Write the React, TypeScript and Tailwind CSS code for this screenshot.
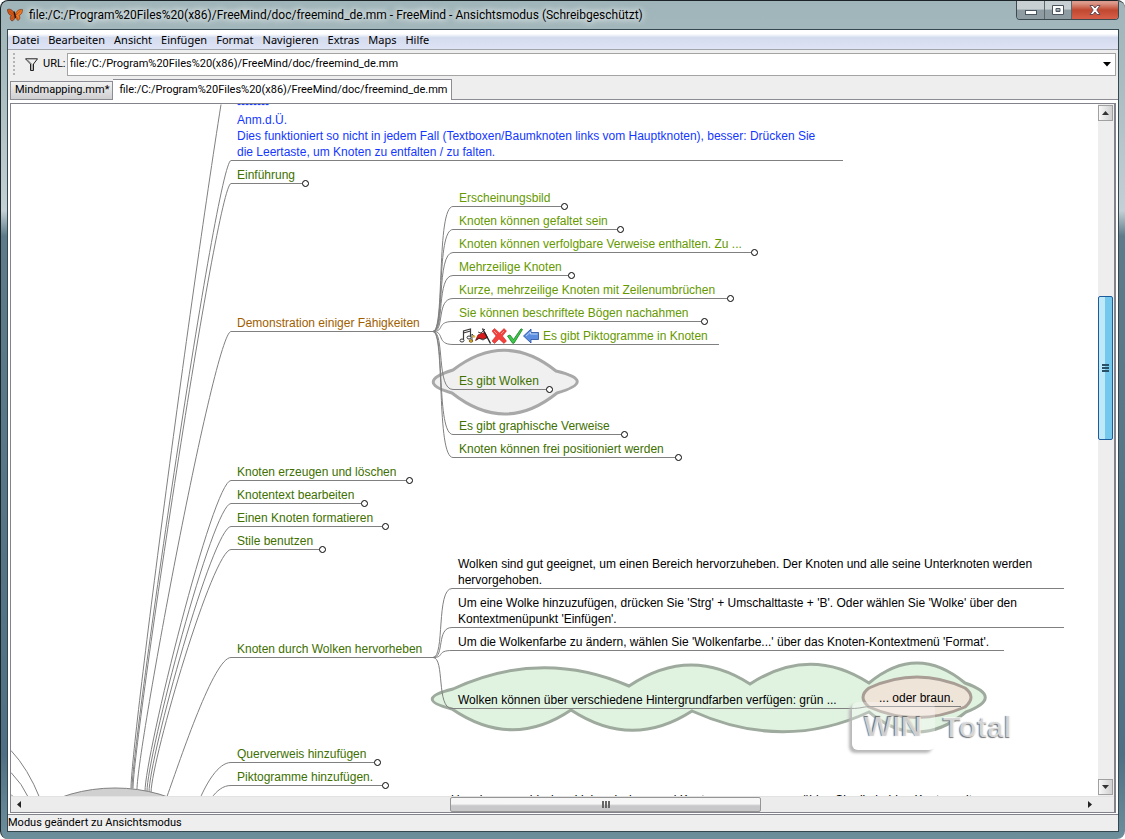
import React from 'react'
import clsx from 'clsx'

interface MapNode {
  x: number
  line: number
  end: number
  lines: string[]
  color: string
  folded?: boolean
  icons?: boolean
}

const BLUE = 'text-[#1437ff]'
const GREEN = 'text-[#407000]'
const LIME = 'text-[#669900]'
const BROWN = 'text-[#a06000]'
const BLACK = 'text-black'

const menus = [
  'Datei',
  'Bearbeiten',
  'Ansicht',
  'Einfügen',
  'Format',
  'Navigieren',
  'Extras',
  'Maps',
  'Hilfe',
]

const fileName = 'file:/C:/Program%20Files%20(x86)/FreeMind/doc/freemind_de.mm'

const nodes: MapNode[] = [
  {
    x: 231,
    line: 160,
    end: 843,
    color: BLUE,
    lines: [
      '--------',
      'Anm.d.Ü.',
      'Dies funktioniert so nicht in jedem Fall (Textboxen/Baumknoten links vom Hauptknoten), besser: Drücken Sie',
      'die Leertaste, um Knoten zu entfalten / zu falten.',
    ],
  },
  { x: 231, line: 183, end: 302, color: GREEN, folded: true, lines: ['Einführung'] },
  { x: 231, line: 331, end: 433, color: BROWN, lines: ['Demonstration einiger Fähigkeiten'] },
  { x: 231, line: 480, end: 406, color: GREEN, folded: true, lines: ['Knoten erzeugen und löschen'] },
  { x: 231, line: 503, end: 361, color: GREEN, folded: true, lines: ['Knotentext bearbeiten'] },
  { x: 231, line: 526, end: 382, color: GREEN, folded: true, lines: ['Einen Knoten formatieren'] },
  { x: 231, line: 549, end: 319, color: GREEN, folded: true, lines: ['Stile benutzen'] },
  { x: 231, line: 657, end: 433, color: GREEN, lines: ['Knoten durch Wolken hervorheben'] },
  { x: 231, line: 762, end: 374, color: GREEN, folded: true, lines: ['Querverweis hinzufügen'] },
  { x: 231, line: 785, end: 382, color: GREEN, folded: true, lines: ['Piktogramme hinzufügen.'] },

  { x: 453, line: 206, end: 561, color: LIME, folded: true, lines: ['Erscheinungsbild'] },
  { x: 453, line: 229, end: 617, color: LIME, folded: true, lines: ['Knoten können gefaltet sein'] },
  { x: 453, line: 252, end: 751, color: LIME, folded: true, lines: ['Knoten können verfolgbare Verweise enthalten. Zu ...'] },
  { x: 453, line: 275, end: 568, color: LIME, folded: true, lines: ['Mehrzeilige Knoten'] },
  { x: 453, line: 298, end: 727, color: LIME, folded: true, lines: ['Kurze, mehrzeilige Knoten mit Zeilenumbrüchen'] },
  { x: 453, line: 321, end: 701, color: LIME, folded: true, lines: ['Sie können beschriftete Bögen nachahmen'] },
  { x: 453, line: 344, end: 719, color: LIME, icons: true, lines: ['Es gibt Piktogramme in Knoten'] },
  { x: 453, line: 389, end: 546, color: GREEN, folded: true, lines: ['Es gibt Wolken'] },
  { x: 453, line: 434, end: 621, color: GREEN, folded: true, lines: ['Es gibt graphische Verweise'] },
  { x: 453, line: 457, end: 675, color: GREEN, folded: true, lines: ['Knoten können frei positioniert werden'] },

  {
    x: 452,
    line: 588,
    end: 1064,
    color: BLACK,
    lines: [
      'Wolken sind gut geeignet, um einen Bereich hervorzuheben. Der Knoten und alle seine Unterknoten werden',
      'hervorgehoben.',
    ],
  },
  {
    x: 452,
    line: 627,
    end: 1064,
    color: BLACK,
    lines: [
      "Um eine Wolke hinzuzufügen, drücken Sie 'Strg' + Umschalttaste + 'B'. Oder wählen Sie 'Wolke' über den",
      "Kontextmenüpunkt 'Einfügen'.",
    ],
  },
  {
    x: 452,
    line: 650,
    end: 1004,
    color: BLACK,
    lines: ["Um die Wolkenfarbe zu ändern, wählen Sie 'Wolkenfarbe...' über das Knoten-Kontextmenü 'Format'."],
  },
  {
    x: 452,
    line: 708,
    end: 851,
    color: BLACK,
    lines: ['Wolken können über verschiedene Hintergrundfarben verfügen: grün ...'],
  },
  { x: 873, line: 706, end: 961, color: BLACK, lines: ['... oder braun.'] },
  {
    x: 445,
    line: 808,
    end: 1064,
    color: BLACK,
    lines: ['Um einen graphischen Link zwischen zwei Knoten zu erzeugen, wählen Sie die beiden Knoten mit'],
  },
]

const rootEdges = [
  'M131 788C131 745 190 300 221 104',
  'M132 788C132 745 217 160 231 160',
  'M133 788C133 745 217 183 231 183',
  'M137 789C137 750 215 331 231 331',
  'M145 791C145 755 213 480 231 480',
  'M147 791C147 756 213 503 231 503',
  'M149 792C149 757 213 526 231 526',
  'M151 792C152 757 213 549 231 549',
  'M167 796C181 757 214 657 231 657',
  'M200 798C206 784 218 762 231 762',
  'M211 798C217 790 223 785 231 785',
  'M11 750Q28 768 40 798',
  'M11 772Q22 783 29 798',
  'M11 794L15 798',
]

const demoTargets = [206, 229, 252, 275, 298, 321, 344, 389, 434, 457]
const cloudTargets = [588, 627, 650, 708]

function Butterfly() {
  return (
    <svg className="h-4 w-4 shrink-0" viewBox="0 0 16 16" aria-hidden="true">
      <path d="M8 7C6 3 3 1.500 .5 2.500C.5 5 1.500 8 4.500 8.500C2.500 10 3 13 5 14C7 13.500 8 11 8.500 9Z" fill="#d4591a" stroke="#5e2508" strokeWidth=".6" />
      <path d="M8.500 7.500C9 4 12 2 15.500 2.500C15.500 5.500 14.500 7.500 12 8.500C13.500 10 13 12.500 11 13.500C9.500 12.500 8.500 11 8.500 9Z" fill="#f07a24" stroke="#6b2a08" strokeWidth=".6" />
      <path d="M2 4L7 8M4.500 12L7.500 9M13.500 4L9 8M11 12L9 9" stroke="#b9430e" strokeWidth=".8" />
      <path d="M7 4.500L8.500 11" stroke="#2a1408" strokeWidth="1.300" />
    </svg>
  )
}

function NodeIcons() {
  return (
    <svg className="mr-1 h-4 w-20 shrink-0" viewBox="0 0 80 16" aria-hidden="true">
      {/* music notes */}
      <path d="M4.500 12V3L11.500 1V9M4.500 5L11.500 3" fill="none" stroke="#3a3a3a" strokeWidth="1.200" />
      <ellipse cx="3" cy="12.500" rx="2" ry="1.500" fill="#fff" stroke="#333" />
      <ellipse cx="10" cy="9.500" rx="2" ry="1.500" fill="#fff" stroke="#333" />
      <path d="M13 6V13M13 6L15 8" stroke="#444" />
      <ellipse cx="12" cy="13" rx="1.800" ry="1.300" fill="#e9b42c" stroke="#57430a" strokeWidth=".7" />
      <circle cx="15" cy="8.500" r="1.300" fill="#e9b42c" />
      {/* flag */}
      <path d="M16.500 12.500L19 7L22 5.500L26 4.500L28.500 9.500L24 11L20 10.500Z" fill="#d81c1c" stroke="#6e0c0c" strokeWidth=".7" />
      <path d="M19 4L22 5L26 1M17 12L20 10L24 12L28 9.500" fill="none" stroke="#222" strokeWidth=".8" />
      <path d="M23.500 .5L31.500 15.500" stroke="#222" strokeWidth="1.400" />
      {/* cross */}
      <path d="M33 3L35.500 .5L40.500 5L45 .5L47.500 3L43.500 8L47.500 13L45 15.500L40 11L35.500 15.500L33 13L37 8Z" fill="#f2403c" stroke="#c51f1f" strokeWidth=".5" />
      <path d="M35 3L38 6M42 6L45 3" stroke="#ff9b94" />
      {/* check mark */}
      <path d="M48.500 8L51 7L54.500 11.500L62 .8L63.500 1.500L55 15.200H53.500Z" fill="#3fc94b" stroke="#147d20" strokeWidth=".8" />
      {/* arrow */}
      <path d="M64.500 8L72 1V4.500H79.500V11.500H72V15Z" fill="#5d8fe0" stroke="#244f9e" strokeWidth=".8" />
      <path d="M67 8L71.500 4V6H78.500" fill="none" stroke="#b9d1f6" />
    </svg>
  )
}

function Node({ node }: { node: MapNode }) {
  return (
    <div
      className={clsx('absolute whitespace-nowrap border-b border-[#808080] pl-[6px]', node.color)}
      style={{
        left: node.x,
        top: node.line - node.lines.length * 16,
        width: node.end - node.x,
      }}
    >
      {node.lines.map((text) => (
        <div key={text} className="flex h-4 items-center leading-4">
          {node.icons && <NodeIcons />}
          <span>{text}</span>
        </div>
      ))}
      {node.folded && (
        <span className="absolute -right-[7px] -bottom-1 h-[7px] w-[7px] rounded-full border border-black bg-white" />
      )}
    </div>
  )
}

function MindMap() {
  return (
    <div className="relative min-w-0 flex-1 overflow-hidden bg-white">
      <div className="absolute -left-[11px] -top-[104px] h-[900px] w-[1200px] font-['Liberation_Sans',Arial,sans-serif] text-[12px]">
        <svg className="absolute inset-0" width="1200" height="900" fill="none" aria-hidden="true">
          <path
            d="M453 370Q505 330 556 371Q598 381 557 393Q505 435 452 393Q414 382 453 370Z"
            fill="#f0f0f0"
            stroke="#a8a8a8"
            strokeWidth="3"
          />
          <path
            d="M453 689Q541 648 629 686Q690 645 750 684Q810 645 869 683Q917 643 965 683Q1005 697 966 712Q917 752 869 712Q783 752 692 711Q632 750 571 710Q512 750 452 709Q412 699 453 689Z"
            fill="#e0f2e0"
            stroke="#9daa9d"
            strokeWidth="3"
          />
          <path
            d="M869 688Q917 666 965 688Q977 697 965 707Q917 728 869 707Q857 697 869 688Z"
            fill="#efe4d8"
            stroke="#a99e95"
            strokeWidth="3"
          />
          <g stroke="#808080">
            {rootEdges.map((d) => (
              <path key={d} d={d} transform="translate(0 .5)" />
            ))}
            {demoTargets.map((y) => (
              <path key={y} d={`M433 331.500C445 331.500 436 ${y + 0.5} 453 ${y + 0.5}`} />
            ))}
            {cloudTargets.map((y) => (
              <path key={y} d={`M433 657.500C445 657.500 436 ${y + 0.5} 452 ${y + 0.5}`} />
            ))}
            <path d="M851 708.500C862 708.500 862 706.500 873 706.500" />
            <ellipse cx="115" cy="868" rx="115" ry="80" fill="#d0d0d0" />
          </g>
        </svg>
        {nodes.map((node) => (
          <Node key={node.line} node={node} />
        ))}
        <div className="absolute left-[852px] top-[702px] flex h-12 items-center text-[30px] text-white/70">
          <span className="flex h-12 w-[83px] items-center justify-center rounded-md bg-white/30 font-bold shadow-[-3px_3px_3px_#b8b8b8] [text-shadow:-1px_-1px_1px_#666]">
            WIN
          </span>
          <span className="pl-2 font-bold [text-shadow:-1px_1px_1px_#777]">Total</span>
        </div>
      </div>
    </div>
  )
}

function VerticalScrollbar() {
  const button =
    'flex h-4 w-[15px] items-center justify-center border border-[#a0a0a0] bg-linear-to-r from-[#f8f8f8] to-[#d0d0d0]'
  return (
    <div className="flex w-4 flex-col bg-[#eeeeee] py-px">
      <button type="button" className={button} aria-label="Nach oben">
        <svg width="7" height="4" viewBox="0 0 7 4">
          <path d="M0 4L3.500 0L7 4Z" fill="#333" />
        </svg>
      </button>
      <div className="grow-[175]" />
      <div className="flex h-36 w-[15px] flex-col items-center justify-center gap-px rounded-xs border border-[#1c5c9c] bg-linear-to-r from-[#bfe8f8] from-45% to-[#74c8ee] to-50%">
        <span className="h-[2px] w-[7px] bg-[#2a5068]" />
        <span className="h-[2px] w-[7px] bg-[#2a5068]" />
        <span className="h-[2px] w-[7px] bg-[#2a5068]" />
      </div>
      <div className="grow-[339]" />
      <button type="button" className={button} aria-label="Nach unten">
        <svg width="7" height="4" viewBox="0 0 7 4">
          <path d="M0 0H7L3.500 4Z" fill="#333" />
        </svg>
      </button>
    </div>
  )
}

function HorizontalScrollbar() {
  return (
    <div className="flex h-4 items-stretch border-t border-[#e2e2e2] bg-[#ececec] pr-4">
      <button type="button" className="flex w-4 items-center justify-center" aria-label="Nach links">
        <svg width="4" height="7" viewBox="0 0 4 7">
          <path d="M4 0V7L0 3.500Z" fill="#222" />
        </svg>
      </button>
      <div className="grow-[424]" />
      <div className="flex w-[311px] items-center justify-center gap-px rounded-xs border border-[#959595] bg-linear-to-b from-[#f6f6f6] from-45% to-[#c8c8ca] to-60%">
        <span className="h-[7px] w-[2px] bg-[#666]" />
        <span className="h-[7px] w-[2px] bg-[#666]" />
        <span className="h-[7px] w-[2px] bg-[#666]" />
      </div>
      <div className="grow-[321]" />
      <button type="button" className="flex w-4 items-center justify-center" aria-label="Nach rechts">
        <svg width="4" height="7" viewBox="0 0 4 7">
          <path d="M0 0V7L4 3.500Z" fill="#222" />
        </svg>
      </button>
    </div>
  )
}

function TitleBar() {
  return (
    <header className="flex h-7 shrink-0 items-center">
      <div className="flex items-center gap-[6px] text-[12px] whitespace-nowrap [text-shadow:0_0_8px_#fff,0_0_6px_#fff]">
        <Butterfly />
        <h1>{fileName} - FreeMind - Ansichtsmodus (Schreibgeschützt)</h1>
      </div>
      <div className="ml-auto flex h-[19px] self-start overflow-hidden rounded-b-sm border border-t-0 border-[#3c4a50]">
        <button
          type="button"
          aria-label="Minimieren"
          className="flex w-7 items-end justify-center border-r border-[#5a686e] bg-linear-to-b from-[#c8d0d4] from-45% to-[#8e9ca2] to-50% pb-1"
        >
          <svg width="12" height="5" viewBox="0 0 12 5">
            <rect x=".5" y=".5" width="11" height="4" fill="#fff" stroke="#4a5560" />
          </svg>
        </button>
        <button
          type="button"
          aria-label="Maximieren"
          className="flex w-[27px] items-center justify-center border-r border-[#5a686e] bg-linear-to-b from-[#c8d0d4] from-45% to-[#8e9ca2] to-50%"
        >
          <svg width="12" height="10" viewBox="0 0 12 10">
            <path d="M.5 .5H11.500V9.500H.5ZM4 3.500V6.500H8V3.500Z" fill="#fff" fillRule="evenodd" stroke="#4a5560" />
          </svg>
        </button>
        <button
          type="button"
          aria-label="Schließen"
          className="flex w-[46px] items-center justify-center bg-linear-to-b from-[#dc9a8c] from-10% via-[#c04830] via-50% to-[#d8604a]"
        >
          <svg width="12" height="10" viewBox="0 0 12 10">
            <path
              d="M1 .5H4L6 3L8 .5H11L7.800 5L11 9.500H8L6 7L4 9.500H1L4.200 5Z"
              fill="#fff"
              stroke="#5a4450"
              strokeWidth=".9"
            />
          </svg>
        </button>
      </div>
    </header>
  )
}

export default function App() {
  return (
    <div className="flex h-screen flex-col overflow-hidden rounded-lg border-t border-l border-[#1c2428] bg-[linear-gradient(#9fb5b9_0,#a9bcc0_80px,#c3d0d5_210px,#5d7b8a_235px,#4f7084_90%,#6d8f9c_100%)] pr-[6px] pb-[7px] pl-[6px] font-['Roboto',sans-serif] text-[11px] text-black">
      <TitleBar />
      <div className="flex min-h-0 flex-1 flex-col border border-[#35484f] bg-[#eeeeee]">
        <nav className="flex h-5 shrink-0 items-center gap-[9px] border-b border-[#a0a4ac] bg-linear-to-b from-white from-20% via-[#d3dbee] via-40% to-[#dfe4f5] pt-px pl-1 font-['Noto_Sans',sans-serif]">
          {menus.map((menu) => (
            <button key={menu} type="button">
              {menu}
            </button>
          ))}
        </nav>

        <div className="flex h-7 shrink-0 items-center pr-[2px] pl-[5px]">
          <span className="h-[22px] border-l-2 border-dotted border-[#b4b4b4]" />
          <svg className="ml-[10px] h-[13px] w-[13px]" viewBox="0 0 13 13" aria-hidden="true">
            <path d="M.5 .8H12.500L8.500 6V12.500H5.500V6Z" fill="#eee" stroke="#222" />
            <path d="M2.500 2L7 6.500V12" stroke="#777" fill="none" />
          </svg>
          <label htmlFor="url" className="ml-[5px] w-[23px] whitespace-nowrap">
            URL:
          </label>
          <div className="relative ml-px flex-1">
            <select id="url" className="block h-[23px] w-full appearance-none border border-[#a4a4a4] bg-white pl-[2px]">
              <option>{fileName}</option>
            </select>
            <svg className="pointer-events-none absolute top-[9px] right-[5px]" width="8" height="5" viewBox="0 0 8 5">
              <path d="M0 0H8L4 4.500Z" fill="#000" />
            </svg>
          </div>
        </div>

        <div role="tablist" className="flex h-[22px] shrink-0 items-end pl-[2px]">
          <button
            type="button"
            role="tab"
            aria-selected="false"
            className="h-[19px] border border-[#8c8c94] bg-linear-to-b from-[#f2f2f2] to-[#cfcfd2] pr-[3px] pl-1 whitespace-nowrap"
          >
            Mindmapping.mm*
          </button>
          <button
            type="button"
            role="tab"
            aria-selected="true"
            className="h-[21px] border border-b-0 border-l-0 border-[#8c8c94] bg-white pr-1 pl-[6px] whitespace-nowrap"
          >
            {fileName}
          </button>
          <span className="h-px flex-1 bg-[#8c8c94]" />
        </div>

        <main className="flex min-h-0 flex-1 flex-col bg-white px-[2px] pt-[3px] pb-px">
          <div className="flex min-h-0 flex-1 flex-col border border-r-2 border-[#83838c]">
            <div className="flex min-h-0 flex-1">
              <MindMap />
              <VerticalScrollbar />
            </div>
            <HorizontalScrollbar />
          </div>
        </main>

        <footer className="h-[17px] shrink-0 border-t border-[#83838c] leading-4">
          Modus geändert zu Ansichtsmodus
        </footer>
      </div>
    </div>
  )
}
